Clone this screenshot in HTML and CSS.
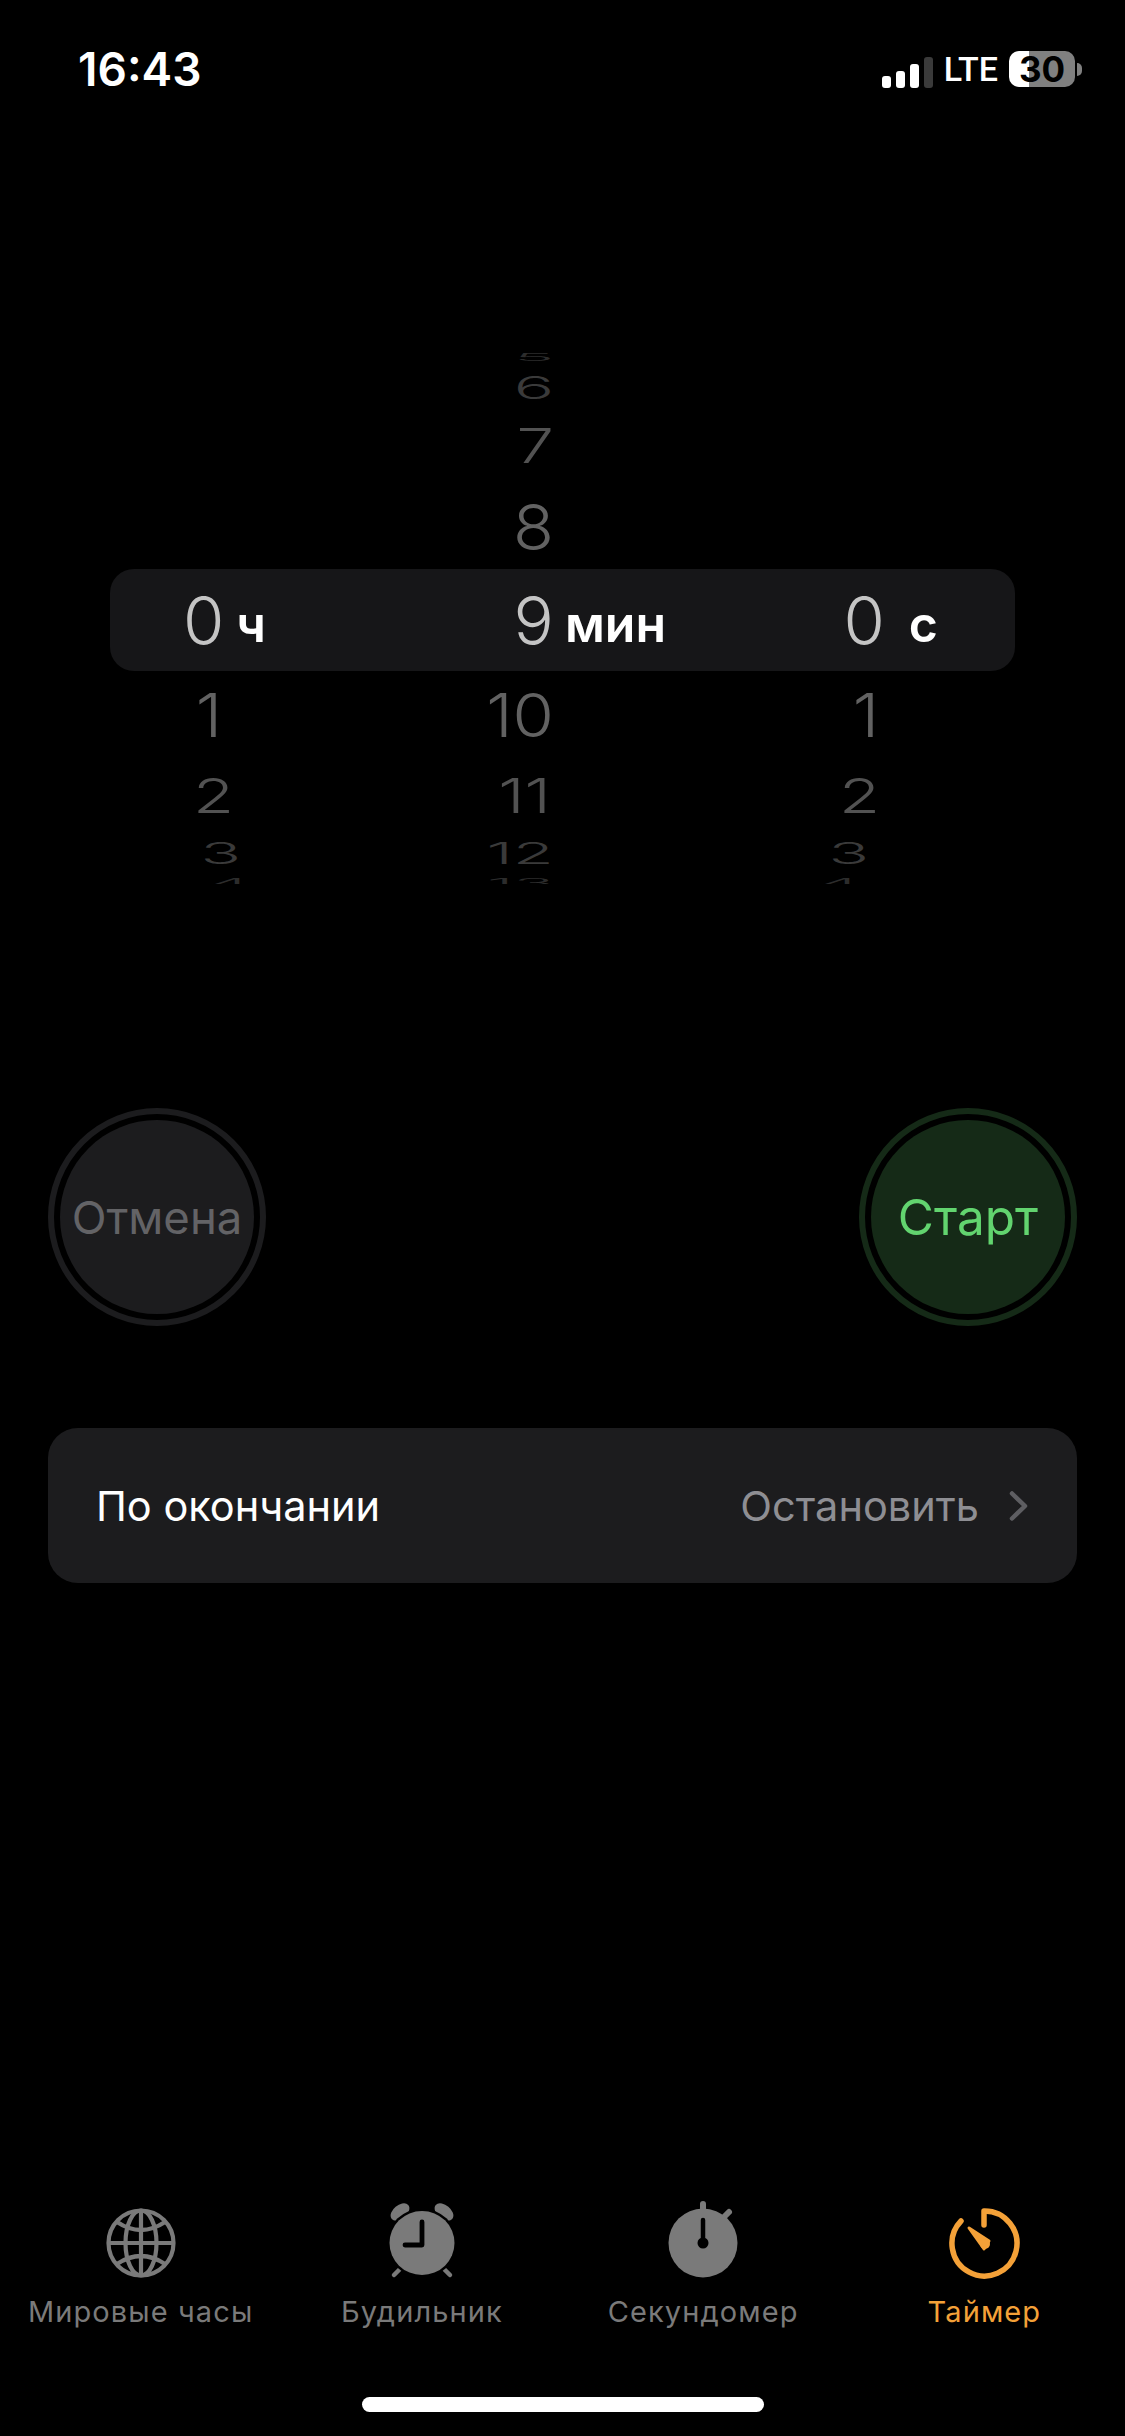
FILE: index.html
```html
<!DOCTYPE html>
<html lang="ru">
<head>
<meta charset="utf-8">
<title>Таймер</title>
<link rel="stylesheet" href="styles.css">
</head>
<body>
<main class="screen">
  <header class="status">
    <span class="time">16:43</span>
    <div class="indicators">
      <div class="signal"><i class="bar b1"></i><i class="bar b2"></i><i class="bar b3"></i><i class="bar b4"></i></div>
      <span class="lte">LTE</span>
      <div class="battery"><span class="level">30</span></div>
      <i class="nub"></i>
    </div>
  </header>

  <section class="picker">
    <div class="band"></div>
    <div class="cell"></div><div class="cell m"><span class="num f5">5</span></div><div class="cell"></div>
    <div class="cell"></div><div class="cell m"><span class="num f6">6</span></div><div class="cell"></div>
    <div class="cell"></div><div class="cell m"><span class="num f7">7</span></div><div class="cell"></div>
    <div class="cell"></div><div class="cell m"><span class="num f8">8</span></div><div class="cell"></div>
    <div class="cell sel-h"><span class="num sel">0</span><span class="unit unit-h">ч</span></div>
    <div class="cell sel-m"><span class="num sel">9</span><span class="unit unit-m">мин</span></div>
    <div class="cell sel-s"><span class="num sel">0</span><span class="unit unit-s">с</span></div>
    <div class="cell h1"><span class="num a1">1</span></div><div class="cell m"><span class="num a1">10</span></div><div class="cell s1"><span class="num a1">1</span></div>
    <div class="cell h2"><span class="num a2">2</span></div><div class="cell m2"><span class="num a2">11</span></div><div class="cell s2"><span class="num a2">2</span></div>
    <div class="cell h3"><span class="num a3">3</span></div><div class="cell m"><span class="num a3">12</span></div><div class="cell s3"><span class="num a3">3</span></div>
    <div class="cell h4"><span class="num a4">4</span></div><div class="cell m"><span class="num a4">13</span></div><div class="cell s4"><span class="num a4">4</span></div>
  </section>

  <section class="actions">
    <button class="round cancel"><span class="round-in">Отмена</span></button>
    <button class="round start"><span class="round-in">Старт</span></button>
  </section>

  <section class="card">
    <span class="card-title">По окончании</span>
    <span class="card-value">Остановить</span>
    <svg class="chevron" width="20" height="30" viewBox="0 0 20 30"><path d="M3 2.5 16 15 3 27.500" fill="none" stroke="#5e5e62" stroke-width="4.500" stroke-linecap="round" stroke-linejoin="round"/></svg>
  </section>

  <nav class="tabs">
    <div class="tab">
      <svg class="icon" width="84" height="84" viewBox="-42 -42 84 84" fill="none" stroke="#7a7a7a" stroke-width="4.200">
        <circle r="32.500"/><ellipse rx="15.500" ry="32.500"/><path d="M0-32.500V32.500M-32.500 0H32.500M-24-21Q0-5 24-21M-24 21Q0 5 24 21"/>
      </svg>
      <span class="label">Мировые часы</span>
    </div>
    <div class="tab">
      <svg class="icon" width="84" height="84" viewBox="-42 -42 84 84">
        <g fill="#7a7a7a" stroke="#7a7a7a" stroke-width="4.500" stroke-linecap="round">
          <ellipse cx="-22" cy="-31" rx="8.500" ry="4.500" transform="rotate(-40 -22 -31)"/>
          <ellipse cx="22" cy="-31" rx="8.500" ry="4.500" transform="rotate(40 22 -31)"/>
          <path d="M-21 25-28 32M21 25 28 32" fill="none"/>
        </g>
        <ellipse rx="35" ry="34.500" fill="#000"/>
        <ellipse rx="32.500" ry="32" fill="#7a7a7a"/>
        <path d="M0-21V2H-17" fill="none" stroke="#000" stroke-width="4.800" stroke-linecap="round" stroke-linejoin="round"/>
      </svg>
      <span class="label">Будильник</span>
    </div>
    <div class="tab">
      <svg class="icon" width="84" height="84" viewBox="-42 -42 84 84">
        <path d="M0-39V-32M26-31 20-25" stroke="#7a7a7a" stroke-width="6" stroke-linecap="round"/>
        <circle r="34.500" fill="#7a7a7a"/>
        <path d="M0-23V0" stroke="#000" stroke-width="4.500" stroke-linecap="round"/>
        <circle r="5.500" fill="#000"/>
      </svg>
      <span class="label">Секундомер</span>
    </div>
    <div class="tab active">
      <svg class="icon" width="84" height="84" viewBox="-42 -42 84 84" fill="none" stroke="#f4a138" stroke-linecap="round">
        <path d="M0-18V-32A32.500 32.500 0 1 1-23-22" stroke-width="5.500" stroke-linejoin="round"/>
        <path d="M-15-15 5-2 0 6Z" fill="#f4a138" stroke-width="3" stroke-linejoin="round"/>
        <circle cx="1" cy="1" r="5" fill="#f4a138" stroke="none"/>
      </svg>
      <span class="label">Таймер</span>
    </div>
  </nav>
  <div class="home"><i class="home-bar"></i></div>
</main>
</body>
</html>
```
FILE: styles.css
```css
* { box-sizing: border-box; }
html, body { margin: 0; background: #000; }
.screen {
  width: 1125px; height: 2436px; overflow: hidden;
  display: flex; flex-direction: column;
  background: #000; color: #fff;
  font-family: Inter, "Noto Sans", "Liberation Sans", sans-serif;
}

/* status bar */
.status {
  height: 138px; flex: none;
  display: flex; justify-content: space-between; align-items: center;
  padding: 0 43px 0 78px;
}
.time { font-size: 46px; font-weight: 600; letter-spacing: 0; }
.indicators { display: flex; align-items: center; }
.signal { display: flex; align-items: flex-end; gap: 5px; height: 31px; margin-top: 6px; }
.bar { width: 9px; background: #fff; border-radius: 3px; display: block; }
.b1 { height: 12px; } .b2 { height: 17px; } .b3 { height: 24px; } .b4 { height: 31px; background: #3a3a3a; }
.lte { font-family: Roboto, sans-serif; font-size: 34px; font-weight: 500; margin-left: 11px; line-height: 36px; }
.battery {
  width: 66px; height: 36px; margin-left: 11px; border-radius: 10px;
  background: linear-gradient(to right, #fff 0 20px, #808080 20px);
  display: flex; align-items: center; justify-content: center;
}
.level { color: #000; font-size: 35px; font-weight: 700; line-height: 36px; }
.nub { width: 5px; height: 13px; margin-left: 2px; background: #808080; border-radius: 0 7px 7px 0; }

/* wheel picker */
.picker {
  position: relative; flex: none;
  height: 539px; margin-top: 207px;
  padding-left: 110px;
  overflow: hidden;
  display: grid;
  grid-template-columns: 170px 400px 335px;
  grid-template-rows: 25px 34px 83px 79px 109px 79px 82px 33px 28px;
}
.band {
  position: absolute; left: 110px; top: 224px;
  width: 905px; height: 102px;
  border-radius: 24px; background: #161618;
}
.cell { position: relative; display: flex; align-items: center; justify-content: flex-end; }
.num { display: block; font-size: 67px; font-weight: 300; line-height: 1; }
.f5 { transform: scaleY(.16); color: #2c2c2c; }
.f6 { transform: scaleY(.47); color: #3a3a3a; }
.f7 { transform: scaleY(.72); color: #525252; }
.f8 { transform: scaleY(.95); color: #626262; }
.a1 { transform: scaleY(.91); color: #626262; }
.a2 { transform: scaleY(.71); color: #525252; }
.a3 { transform: scaleY(.45); color: #3a3a3a; }
.a4 { transform: scaleY(.2); color: #2c2c2c; }
.sel { color: #c4c4c4; }
.m { padding-right: 126px; }
.m2 { padding-right: 129px; }
.h1 { padding-right: 58px; } .h2 { padding-right: 46px; } .h3 { padding-right: 39px; } .h4 { padding-right: 30px; }
.s1 { padding-right: 136px; } .s2 { padding-right: 135px; } .s3 { padding-right: 146px; } .s4 { padding-right: 155px; }
.sel-h { padding-right: 14px; }
.sel-m { padding-right: 14px; }
.sel-s { padding-right: 77px; }
.unit { font-size: 50px; font-weight: 600; color: #fff; line-height: 1; align-self: center; margin-top: 6px; }
.unit-h { margin-left: 12px; }
.unit-m { margin-left: 11px; }
.unit-s { margin-left: 24px; }

/* round buttons */
.actions {
  flex: none; height: 218px; margin-top: 224px;
  padding: 0 48px;
  display: flex; justify-content: space-between;
}
.round {
  width: 218px; height: 218px; padding: 6px;
  border: 6px solid; border-radius: 50%;
  background: #000; font: inherit;
  display: block;
}
.round-in {
  display: flex; width: 100%; height: 100%; border-radius: 50%;
  align-items: center; justify-content: center;
  white-space: nowrap;
}
.cancel { border-color: #1c1c1e; }
.cancel .round-in { background: #1c1c1e; color: #636366; font-size: 45.500px; }
.start { border-color: #152a17; }
.start .round-in { background: #152a17; color: #62d46f; font-size: 49.500px; }

/* setting card */
.card {
  flex: none; height: 155px; margin: 102px 48px 0;
  padding: 0 48px 0 48px; border-radius: 30px;
  background: #1c1c1e;
  display: flex; align-items: center;
  font-size: 41.500px;
}
.card-title { flex: 1; }
.card-value { color: #8e8e93; }
.chevron { margin-left: 30px; }

/* tab bar */
.tabs { flex: none; margin-top: auto; display: flex; }
.tab { flex: 1; display: flex; flex-direction: column; align-items: center; color: #7a7a7a; }
.tab.active { color: #f4a138; }
.icon { display: block; }
.label { font-size: 29px; line-height: 36px; margin-top: 9px; letter-spacing: 1.100px; white-space: nowrap; font-weight: 400; }
.home { flex: none; height: 106px; padding-top: 67px; display: flex; justify-content: center; }
.home-bar { display: block; width: 402px; height: 15px; border-radius: 8px; background: #fff; }
```
